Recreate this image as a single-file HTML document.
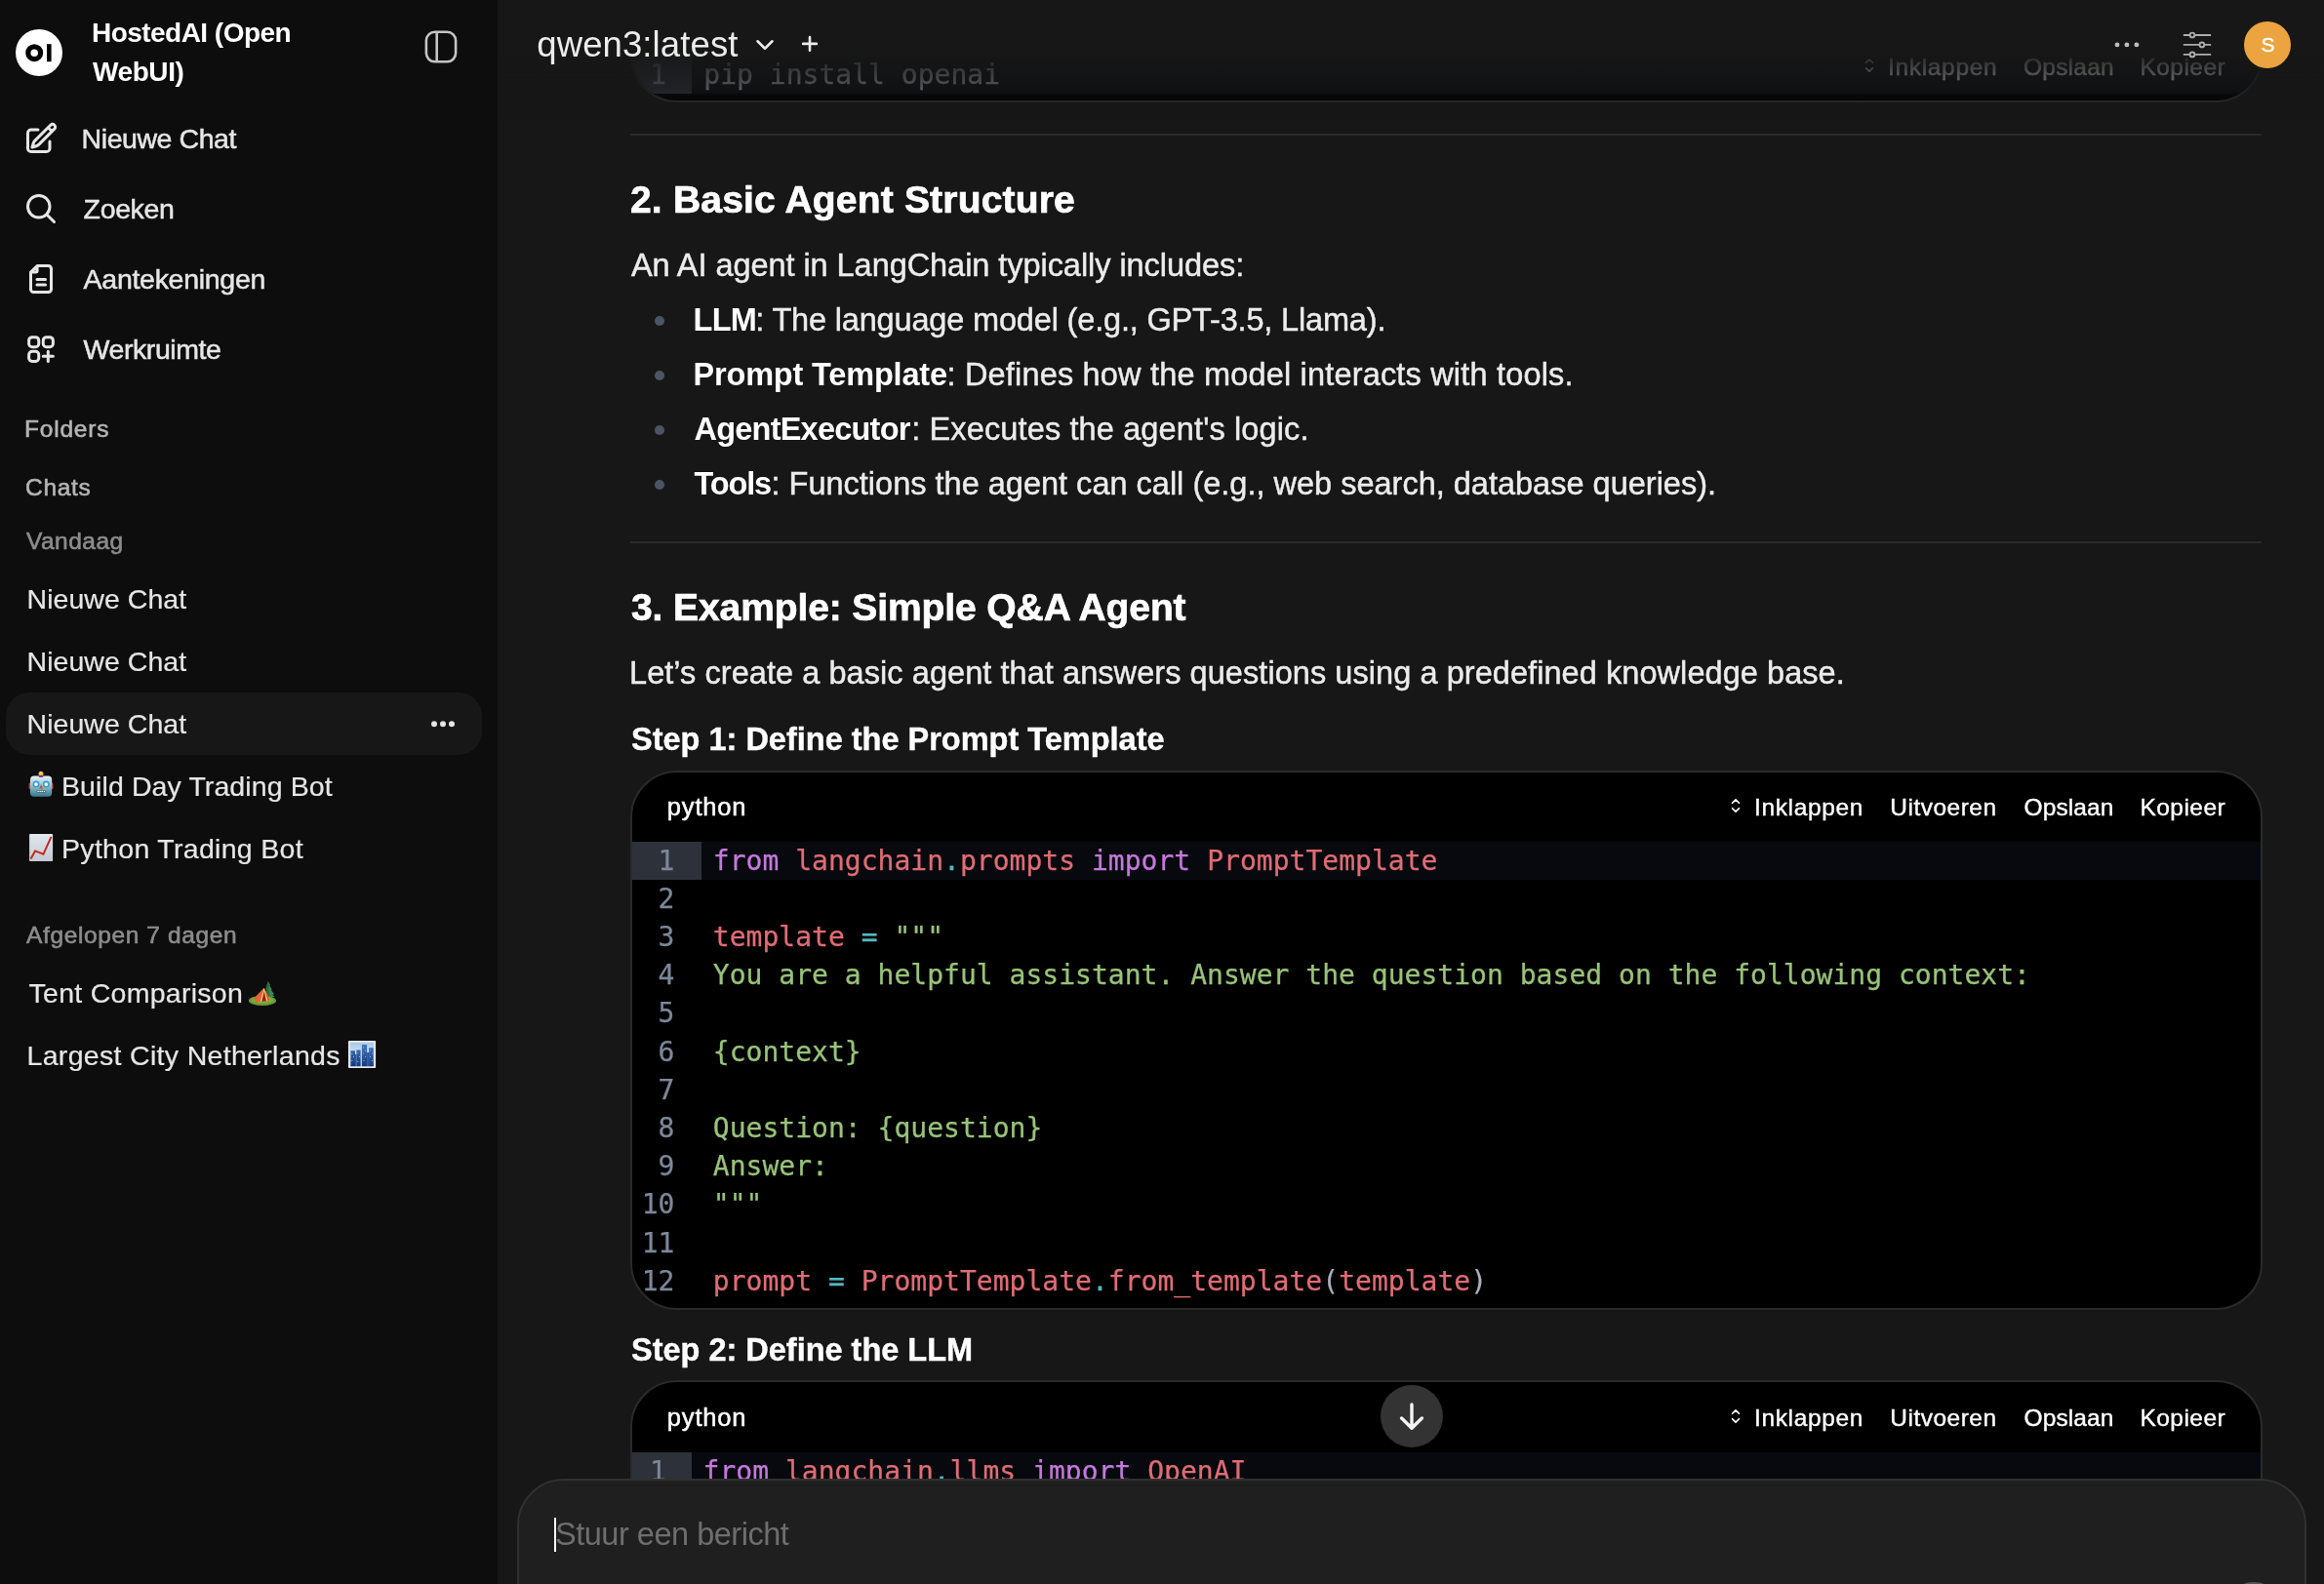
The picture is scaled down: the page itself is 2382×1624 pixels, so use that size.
<!DOCTYPE html>
<html lang="nl">
<head>
<meta charset="utf-8">
<title>Open WebUI</title>
<style>
html,body{margin:0;padding:0;}
body{width:2382px;height:1624px;overflow:hidden;position:relative;background:#171717;font-family:"Liberation Sans",sans-serif;color:#ececec;}
h2,h3,p,ul,li{margin:0;padding:0;font-weight:400;list-style:none;}
.t{position:absolute;white-space:nowrap;margin:0;padding:0;display:block;}
strong.t,h2.t,h3.t{font-weight:700;}
#side{position:absolute;left:0;top:0;width:510px;height:1624px;background:#0d0d0d;will-change:transform;}
#main{position:absolute;left:0;top:0;width:2382px;height:1624px;will-change:transform;}
.abs{position:absolute;}
.hr{position:absolute;left:646px;width:1672px;height:2px;background:#2a2a2a;}
.bul{position:absolute;left:670.5px;width:10.5px;height:10.5px;border-radius:50%;background:#4b5563;}
.cb{position:absolute;left:646px;width:1669px;border:2px solid #2a2a2a;border-radius:48px;background:#000;overflow:hidden;}
.cl{position:absolute;left:0;height:39.2px;line-height:39.2px;font-family:"DejaVu Sans Mono","Liberation Mono",monospace;font-size:28px;letter-spacing:0.02px;white-space:pre;-webkit-text-stroke-width:0.25px;}
.ln{position:absolute;left:0;top:0;text-align:right;color:#7d8799;}
.ct{position:absolute;top:0;}
.al{position:absolute;left:0;width:1669px;background:#07090e;}
.ag{position:absolute;left:0;background:#2c313a;}
#fade{position:absolute;left:510px;top:0;width:1872px;height:124px;background:linear-gradient(to bottom,#171717 0,#171717 44%,rgba(23,23,23,.88) 50%,rgba(23,23,23,.62) 72%,rgba(23,23,23,.2) 84%,rgba(23,23,23,0) 100%);}
#inp{position:absolute;left:530px;top:1516px;width:1830px;height:160px;border:2px solid #303030;border-radius:48px;background:#1f1f1f;}
</style>
</head>
<body>
<main id="main">
  <!-- previous code block (scrolled under header) -->
  <div class="cb" style="top:-60px;height:160.5px;">
<div class="al" style="top:114.70px;height:39.2px"></div>
<div class="ag" style="top:114.70px;width:61px;height:39.2px"></div>
<div class="cl" style="top:114.70px"><span class="ln" style="width:35.0px">1</span><code class="ct" style="left:73.30px"><span style="color:#abb2bf">pip install openai</span></code></div>
  </div>
<svg class="abs" style="left:1905px;top:56px" width="22" height="22" viewBox="0 0 24 24" fill="none" stroke="#fff" stroke-width="1.9" stroke-linecap="round" stroke-linejoin="round"><path d="M8.25 15 12 18.75 15.75 15m-7.5-6L12 5.25 15.75 9"/></svg>
<span class="t c0btn" style="left:1935.00px;top:54.50px;font-size:24.5px;line-height:27px;letter-spacing:0.671px;color:#ffffff;-webkit-text-stroke:0.4px currentColor;">Inklappen</span>
<span class="t c0btn" style="left:2074.00px;top:54.50px;font-size:24.5px;line-height:27px;letter-spacing:0.229px;color:#ffffff;-webkit-text-stroke:0.4px currentColor;">Opslaan</span>
<span class="t c0btn" style="left:2193.50px;top:54.50px;font-size:24.5px;line-height:27px;letter-spacing:0.452px;color:#ffffff;-webkit-text-stroke:0.4px currentColor;">Kopieer</span>
  <div class="hr" style="top:137px"></div>
<h2 class="t h2a" style="left:646.00px;top:183.00px;font-size:39px;line-height:43px;letter-spacing:0.184px;color:#ffffff;font-weight:700;-webkit-text-stroke:0.7px currentColor;">2. Basic Agent Structure</h2>
<p class="t p1" style="left:647.00px;top:254.00px;font-size:32.5px;line-height:36px;letter-spacing:-0.054px;color:#ececec;-webkit-text-stroke:0.45px currentColor;">An AI agent in LangChain typically includes:</p>
  <ul>
    <li><i class="bul" style="top:323.75px"></i>
<strong class="t li1" style="left:710.50px;top:310.00px;font-size:32.5px;line-height:36px;letter-spacing:-0.727px;color:#ffffff;font-weight:700;">LLM</strong>
<span class="t li1" style="left:774.25px;top:310.00px;font-size:32.5px;line-height:36px;letter-spacing:-0.167px;color:#ececec;-webkit-text-stroke:0.45px currentColor;">: The language model (e.g., GPT-3.5, Llama).</span>
    </li>
    <li><i class="bul" style="top:379.75px"></i>
<strong class="t li2" style="left:710.50px;top:366.00px;font-size:32.5px;line-height:36px;letter-spacing:-0.177px;color:#ffffff;font-weight:700;">Prompt Template</strong>
<span class="t li2" style="left:970.50px;top:366.00px;font-size:32.5px;line-height:36px;letter-spacing:0.181px;color:#ececec;-webkit-text-stroke:0.45px currentColor;">: Defines how the model interacts with tools.</span>
    </li>
    <li><i class="bul" style="top:435.75px"></i>
<strong class="t li3" style="left:711.50px;top:422.00px;font-size:32.5px;line-height:36px;letter-spacing:-0.771px;color:#ffffff;font-weight:700;">AgentExecutor</strong>
<span class="t li3" style="left:934.25px;top:422.00px;font-size:32.5px;line-height:36px;letter-spacing:0.129px;color:#ececec;-webkit-text-stroke:0.45px currentColor;">: Executes the agent's logic.</span>
    </li>
    <li><i class="bul" style="top:491.75px"></i>
<strong class="t li4" style="left:711.50px;top:478.00px;font-size:32.5px;line-height:36px;letter-spacing:-1.169px;color:#ffffff;font-weight:700;">Tools</strong>
<span class="t li4" style="left:790.50px;top:478.00px;font-size:32.5px;line-height:36px;letter-spacing:0.003px;color:#ececec;-webkit-text-stroke:0.45px currentColor;">: Functions the agent can call (e.g., web search, database queries).</span>
    </li>
  </ul>
  <div class="hr" style="top:555px"></div>
<h2 class="t h2b" style="left:647.00px;top:601.25px;font-size:39px;line-height:43px;letter-spacing:-0.104px;color:#ffffff;font-weight:700;-webkit-text-stroke:0.7px currentColor;">3. Example: Simple Q&amp;A Agent</h2>
<p class="t p2" style="left:645.00px;top:671.50px;font-size:32.5px;line-height:36px;letter-spacing:0.062px;color:#ececec;-webkit-text-stroke:0.45px currentColor;">Let’s create a basic agent that answers questions using a predefined knowledge base.</p>
<h3 class="t h3a" style="left:647.00px;top:740.00px;font-size:32.5px;line-height:36px;letter-spacing:0.000px;color:#ffffff;font-weight:700;-webkit-text-stroke:0.4px currentColor;">Step 1: Define the Prompt Template</h3>
  <div class="cb" style="top:790px;height:549px;">
<div class="al" style="top:70.50px;height:39.2px"></div>
<div class="ag" style="top:70.50px;width:71px;height:39.2px"></div>
<div class="cl" style="top:70.50px"><span class="ln" style="width:43.5px">1</span><code class="ct" style="left:82.75px"><span style="color:#c678dd">from</span><span style="color:#e06c75"> langchain</span><span style="color:#56b6c2">.</span><span style="color:#e06c75">prompts</span><span style="color:#c678dd"> import</span><span style="color:#e06c75"> PromptTemplate</span></code></div>
<div class="cl" style="top:109.70px"><span class="ln" style="width:43.5px">2</span><code class="ct" style="left:82.75px"></code></div>
<div class="cl" style="top:148.90px"><span class="ln" style="width:43.5px">3</span><code class="ct" style="left:82.75px"><span style="color:#e06c75">template</span><span style="color:#56b6c2"> = </span><span style="color:#98c379">"""</span></code></div>
<div class="cl" style="top:188.10px"><span class="ln" style="width:43.5px">4</span><code class="ct" style="left:82.75px"><span style="color:#98c379">You are a helpful assistant. Answer the question based on the following context:</span></code></div>
<div class="cl" style="top:227.30px"><span class="ln" style="width:43.5px">5</span><code class="ct" style="left:82.75px"></code></div>
<div class="cl" style="top:266.50px"><span class="ln" style="width:43.5px">6</span><code class="ct" style="left:82.75px"><span style="color:#98c379">{context}</span></code></div>
<div class="cl" style="top:305.70px"><span class="ln" style="width:43.5px">7</span><code class="ct" style="left:82.75px"></code></div>
<div class="cl" style="top:344.90px"><span class="ln" style="width:43.5px">8</span><code class="ct" style="left:82.75px"><span style="color:#98c379">Question: {question}</span></code></div>
<div class="cl" style="top:384.10px"><span class="ln" style="width:43.5px">9</span><code class="ct" style="left:82.75px"><span style="color:#98c379">Answer:</span></code></div>
<div class="cl" style="top:423.30px"><span class="ln" style="width:43.5px">10</span><code class="ct" style="left:82.75px"><span style="color:#98c379">"""</span></code></div>
<div class="cl" style="top:462.50px"><span class="ln" style="width:43.5px">11</span><code class="ct" style="left:82.75px"></code></div>
<div class="cl" style="top:501.70px"><span class="ln" style="width:43.5px">12</span><code class="ct" style="left:82.75px"><span style="color:#e06c75">prompt</span><span style="color:#56b6c2"> = </span><span style="color:#e06c75">PromptTemplate</span><span style="color:#56b6c2">.</span><span style="color:#e06c75">from_template</span><span style="color:#abb2bf">(</span><span style="color:#e06c75">template</span><span style="color:#abb2bf">)</span></code></div>
  </div>
<span class="t c1lang" style="left:683.80px;top:812.50px;font-size:25.5px;line-height:28px;letter-spacing:0.824px;color:#ffffff;-webkit-text-stroke:0.5px currentColor;">python</span>
  <svg class="abs" style="left:1768px;top:815px" width="22" height="22" viewBox="0 0 24 24" fill="none" stroke="#fff" stroke-width="1.9" stroke-linecap="round" stroke-linejoin="round"><path d="M8.25 15 12 18.75 15.75 15m-7.5-6L12 5.25 15.75 9"/></svg>
<span class="t c1btn" style="left:1798.00px;top:813.50px;font-size:24.5px;line-height:27px;letter-spacing:0.640px;color:#ffffff;-webkit-text-stroke:0.4px currentColor;">Inklappen</span>
<span class="t c1btn" style="left:1937.25px;top:813.50px;font-size:24.5px;line-height:27px;letter-spacing:0.503px;color:#ffffff;-webkit-text-stroke:0.4px currentColor;">Uitvoeren</span>
<span class="t c1btn" style="left:2074.50px;top:813.50px;font-size:24.5px;line-height:27px;letter-spacing:0.104px;color:#ffffff;-webkit-text-stroke:0.4px currentColor;">Opslaan</span>
<span class="t c1btn" style="left:2193.50px;top:813.50px;font-size:24.5px;line-height:27px;letter-spacing:0.452px;color:#ffffff;-webkit-text-stroke:0.4px currentColor;">Kopieer</span>
<h3 class="t h3b" style="left:647.00px;top:1366.00px;font-size:32.5px;line-height:36px;letter-spacing:-0.011px;color:#ffffff;font-weight:700;-webkit-text-stroke:0.4px currentColor;">Step 2: Define the LLM</h3>
  <div class="cb" style="top:1415px;height:300px;">
<div class="al" style="top:71.90px;height:39.2px"></div>
<div class="ag" style="top:71.90px;width:61px;height:39.2px"></div>
<div class="cl" style="top:71.90px"><span class="ln" style="width:35.0px">1</span><code class="ct" style="left:72.50px"><span style="color:#c678dd">from</span><span style="color:#e06c75"> langchain</span><span style="color:#56b6c2">.</span><span style="color:#e06c75">llms</span><span style="color:#c678dd"> import</span><span style="color:#e06c75"> OpenAI</span></code></div>
  </div>
<span class="t c2lang" style="left:683.80px;top:1438.50px;font-size:25.5px;line-height:28px;letter-spacing:0.824px;color:#ffffff;-webkit-text-stroke:0.5px currentColor;">python</span>
  <svg class="abs" style="left:1768px;top:1441px" width="22" height="22" viewBox="0 0 24 24" fill="none" stroke="#fff" stroke-width="1.9" stroke-linecap="round" stroke-linejoin="round"><path d="M8.25 15 12 18.75 15.75 15m-7.5-6L12 5.25 15.75 9"/></svg>
<span class="t c2btn" style="left:1798.00px;top:1439.50px;font-size:24.5px;line-height:27px;letter-spacing:0.640px;color:#ffffff;-webkit-text-stroke:0.4px currentColor;">Inklappen</span>
<span class="t c2btn" style="left:1937.25px;top:1439.50px;font-size:24.5px;line-height:27px;letter-spacing:0.503px;color:#ffffff;-webkit-text-stroke:0.4px currentColor;">Uitvoeren</span>
<span class="t c2btn" style="left:2074.50px;top:1439.50px;font-size:24.5px;line-height:27px;letter-spacing:0.104px;color:#ffffff;-webkit-text-stroke:0.4px currentColor;">Opslaan</span>
<span class="t c2btn" style="left:2193.50px;top:1439.50px;font-size:24.5px;line-height:27px;letter-spacing:0.452px;color:#ffffff;-webkit-text-stroke:0.4px currentColor;">Kopieer</span>
  <!-- header fade + top bar -->
  <div id="fade"></div>
<span class="t model" style="left:550.25px;top:25.00px;font-size:36.5px;line-height:41px;letter-spacing:0.109px;color:#ececec;">qwen3:latest</span>
  <svg class="abs" style="left:772px;top:34px" width="24" height="24" viewBox="0 0 24 24" fill="none" stroke="#ececec" stroke-width="2.5" stroke-linecap="round" stroke-linejoin="round"><path d="m19.5 8.25-7.5 7.5-7.5-7.5"/></svg>
  <svg class="abs" style="left:818px;top:33px" width="24" height="24" viewBox="0 0 24 24" fill="none" stroke="#ececec" stroke-width="2.6" stroke-linecap="round"><path d="M12 5.05v13.7M5.15 11.9h13.7"/></svg>
  <svg class="abs" style="left:2160px;top:36px" width="40" height="20" viewBox="0 0 40 20" fill="#bdbdbd"><circle cx="10" cy="9.9" r="2.45"/><circle cx="19.9" cy="9.9" r="2.45"/><circle cx="29.9" cy="9.9" r="2.45"/></svg>
  <svg class="abs" style="left:2234px;top:28px" width="36" height="36" viewBox="0 0 36 36" fill="none" stroke="#adadad" stroke-width="1.9" stroke-linecap="round"><path d="M4.6 8H9.6M16.4 8H31.4M4.6 17.9H19.5M26.3 17.9H31.4M4.6 27.9H9.6M16.4 27.9H31.4"/><circle cx="13" cy="8" r="2.4"/><circle cx="22.9" cy="17.9" r="2.4"/><circle cx="13" cy="27.9" r="2.4"/></svg>
  <div class="abs" style="left:2300px;top:22px;width:48px;height:48px;border-radius:50%;background:#eba43f"></div>
<span class="t avatar" style="left:2317.50px;top:33.50px;font-size:21px;line-height:23px;letter-spacing:-1.000px;color:#ffffff;-webkit-text-stroke:0.4px currentColor;">S</span>
  <!-- message input -->
  <div id="inp"></div>
  <div class="abs" style="left:568px;top:1556px;width:2px;height:35px;background:#fff"></div>
<span class="t ph" style="left:569.00px;top:1554.75px;font-size:32.5px;line-height:36px;letter-spacing:-0.483px;color:#6e6e6e;">Stuur een bericht</span>
  <div class="abs" style="left:2278px;top:1622px;width:64px;height:64px;border-radius:50%;background:#555"></div>
  <!-- scroll to bottom -->
  <div class="abs" style="left:1415px;top:1420px;width:64px;height:64px;border-radius:50%;background:#333"></div>
  <svg class="abs" style="left:1427px;top:1432px" width="40" height="40" viewBox="0 0 40 40" fill="none" stroke="#f4f4f4" stroke-width="3.4" stroke-linecap="round" stroke-linejoin="round"><path d="M20 7.9V32.2M9.6 22 20 32.3 30.4 22"/></svg>
</main>
<aside id="side">
  <div class="abs" style="left:16px;top:30px;width:48px;height:48px;border-radius:50%;background:#fff"></div>
  <svg class="abs" style="left:16px;top:30px" width="48" height="48" viewBox="0 0 48 48"><circle cx="19.2" cy="24.2" r="6.4" fill="none" stroke="#000" stroke-width="5.2"/><rect x="32" y="15.2" width="4.6" height="18" fill="#000"/></svg>
<span class="t title" style="left:94.00px;top:17.90px;font-size:28px;line-height:31px;letter-spacing:-0.535px;color:#ffffff;font-weight:700;">HostedAI (Open</span>
<span class="t title" style="left:95.00px;top:57.90px;font-size:28px;line-height:31px;letter-spacing:-0.420px;color:#ffffff;font-weight:700;">WebUI)</span>
  <svg class="abs" style="left:434px;top:30px" width="36" height="36" viewBox="0 0 36 36" fill="none" stroke="#c4c4c4" stroke-width="2.6"><rect x="2.9" y="2.8" width="30.2" height="30.5" rx="8.8"/><path d="M13.7 2.8V33.3"/></svg>
  <nav>
  <svg class="abs" style="left:24px;top:124px" width="36" height="36" viewBox="0 0 24 24" fill="none" stroke="#e6e6e6" stroke-width="2" stroke-linecap="round" stroke-linejoin="round"><path d="m16.862 4.487 1.687-1.688a1.875 1.875 0 1 1 2.652 2.652L10.582 16.07a4.5 4.5 0 0 1-1.897 1.13L6 18l.8-2.685a4.5 4.5 0 0 1 1.13-1.897l8.932-8.931Zm0 0L19.5 7.125M18 14v4.75A2.25 2.25 0 0 1 15.75 21H5.25A2.25 2.25 0 0 1 3 18.75V8.25A2.25 2.25 0 0 1 5.25 6H10"/></svg>
  <svg class="abs" style="left:24px;top:196px" width="36" height="36" viewBox="0 0 24 24" fill="none" stroke="#e6e6e6" stroke-width="2" stroke-linecap="round" stroke-linejoin="round"><path d="m21 21-5.197-5.197m0 0A7.5 7.5 0 1 0 5.196 5.196a7.5 7.5 0 0 0 10.607 10.607Z"/></svg>
  <svg class="abs" style="left:24px;top:268px" width="36" height="36" viewBox="0 0 24 24" fill="none" stroke="#e6e6e6" stroke-width="2" stroke-linecap="round" stroke-linejoin="round"><path d="M9.4 3H17a2 2 0 0 1 2 2V19a2 2 0 0 1-2 2H7a2 2 0 0 1-2-2V7.4L9.4 3V6.4a1 1 0 0 1-1 1H5M9.3 12.3H15M9.3 16H15"/></svg>
  <svg class="abs" style="left:24px;top:340px" width="36" height="36" viewBox="0 0 24 24" fill="none" stroke="#e6e6e6" stroke-width="2" stroke-linecap="round" stroke-linejoin="round"><path d="M13.5 16.875h3.375m0 0h3.375m-3.375 0V13.5m0 3.375v3.375M6 10.5h2.25a2.25 2.25 0 0 0 2.25-2.25V6a2.25 2.25 0 0 0-2.25-2.25H6A2.25 2.25 0 0 0 3.750 6v2.25A2.25 2.25 0 0 0 6 10.5Zm0 9.75h2.25A2.25 2.25 0 0 0 10.5 18v-2.25a2.25 2.25 0 0 0-2.250-2.250H6a2.25 2.25 0 0 0-2.25 2.25V18A2.25 2.25 0 0 0 6 20.250Zm9.750-9.750H18a2.25 2.25 0 0 0 2.25-2.25V6A2.25 2.25 0 0 0 18 3.750h-2.250A2.25 2.25 0 0 0 13.5 6v2.25a2.25 2.25 0 0 0 2.25 2.25Z"/></svg>
<span class="t nav" style="left:83.60px;top:126.00px;font-size:28.5px;line-height:32px;letter-spacing:-0.435px;color:#e6e6e6;-webkit-text-stroke:0.5px currentColor;">Nieuwe Chat</span>
<span class="t nav" style="left:85.60px;top:198.00px;font-size:28.5px;line-height:32px;letter-spacing:-0.362px;color:#e6e6e6;-webkit-text-stroke:0.5px currentColor;">Zoeken</span>
<span class="t nav" style="left:85.60px;top:270.00px;font-size:28.5px;line-height:32px;letter-spacing:-0.284px;color:#e6e6e6;-webkit-text-stroke:0.5px currentColor;">Aantekeningen</span>
<span class="t nav" style="left:85.60px;top:341.75px;font-size:28.5px;line-height:32px;letter-spacing:-0.434px;color:#e6e6e6;-webkit-text-stroke:0.5px currentColor;">Werkruimte</span>
  </nav>
<span class="t sec" style="left:25.00px;top:426.00px;font-size:24.5px;line-height:27px;letter-spacing:0.801px;color:#b4b4b4;-webkit-text-stroke:0.6px currentColor;">Folders</span>
<span class="t sec" style="left:26.00px;top:485.75px;font-size:24.5px;line-height:27px;letter-spacing:0.687px;color:#b4b4b4;-webkit-text-stroke:0.6px currentColor;">Chats</span>
<span class="t sec" style="left:27.00px;top:540.75px;font-size:24.5px;line-height:27px;letter-spacing:0.475px;color:#8c8c8c;-webkit-text-stroke:0.6px currentColor;">Vandaag</span>
<span class="t sec" style="left:27.00px;top:945.00px;font-size:24.5px;line-height:27px;letter-spacing:0.619px;color:#8c8c8c;-webkit-text-stroke:0.6px currentColor;">Afgelopen 7 dagen</span>
  <div class="abs" style="left:6px;top:710px;width:488px;height:64px;border-radius:24px;background:#171717"></div>
<span class="t chat" style="left:27.50px;top:598.00px;font-size:28.5px;line-height:32px;letter-spacing:0.050px;color:#e6e6e6;-webkit-text-stroke:0.2px currentColor;">Nieuwe Chat</span>
<span class="t chat" style="left:27.50px;top:662.00px;font-size:28.5px;line-height:32px;letter-spacing:0.050px;color:#e6e6e6;-webkit-text-stroke:0.2px currentColor;">Nieuwe Chat</span>
<span class="t chat" style="left:27.50px;top:726.00px;font-size:28.5px;line-height:32px;letter-spacing:0.050px;color:#e6e6e6;-webkit-text-stroke:0.2px currentColor;">Nieuwe Chat</span>
<span class="t chat" style="left:63.00px;top:790.00px;font-size:28.5px;line-height:32px;letter-spacing:0.100px;color:#e6e6e6;-webkit-text-stroke:0.2px currentColor;">Build Day Trading Bot</span>
<span class="t chat" style="left:63.00px;top:854.00px;font-size:28.5px;line-height:32px;letter-spacing:0.309px;color:#e6e6e6;-webkit-text-stroke:0.2px currentColor;">Python Trading Bot</span>
<span class="t chat" style="left:29.50px;top:1001.50px;font-size:28.5px;line-height:32px;letter-spacing:0.280px;color:#e6e6e6;-webkit-text-stroke:0.2px currentColor;">Tent Comparison</span>
<span class="t chat" style="left:27.50px;top:1065.60px;font-size:28.5px;line-height:32px;letter-spacing:0.319px;color:#e6e6e6;-webkit-text-stroke:0.2px currentColor;">Largest City Netherlands</span>
  <svg class="abs" style="left:438px;top:732px" width="32" height="20" viewBox="0 0 32 20" fill="#e6e6e6"><circle cx="7" cy="10.2" r="3"/><circle cx="16" cy="10.2" r="3"/><circle cx="25" cy="10.2" r="3"/></svg>
  <!-- robot -->
  <svg class="abs" role="img" aria-label="🤖" style="left:29px;top:790px" width="26" height="28" viewBox="0 0 26 28">
    <defs><linearGradient id="rb" x1="0" y1="0" x2="0" y2="1"><stop offset="0" stop-color="#e6f1f4"/><stop offset=".45" stop-color="#9cc3cf"/><stop offset="1" stop-color="#357a91"/></linearGradient></defs>
    <circle cx="13" cy="3.3" r="2.5" fill="#f3ae2c"/><circle cx="12.7" cy="2.6" r="1.2" fill="#fbd978"/>
    <rect x="0.6" y="12.6" width="2.6" height="6.6" rx="1.1" fill="#d8392d"/><rect x="22.9" y="12.6" width="2.6" height="6.6" rx="1.1" fill="#d8392d"/>
    <rect x="2" y="5.6" width="22.2" height="21.1" rx="4" fill="url(#rb)"/>
    <rect x="10.6" y="5" width="4.8" height="1.9" rx=".8" fill="#6a3fa3"/>
    <circle cx="8" cy="14.1" r="3.5" fill="#2b9fd8"/><circle cx="8" cy="14.1" r="1.9" fill="#ffffff"/>
    <circle cx="18.3" cy="14.1" r="3.5" fill="#2b9fd8"/><circle cx="18.3" cy="14.1" r="1.9" fill="#ffffff"/>
    <path d="M13.1 14 14.9 18.5H11.3Z" fill="#e0453d"/>
    <rect x="8.6" y="20.2" width="9.2" height="2.4" rx=".6" fill="#2f5f70"/>
    <path d="M9.3 20.7h1.5v1.4H9.3zM11.4 20.7h1.5v1.4h-1.5zM13.5 20.7H15v1.4h-1.5zM15.6 20.7h1.5v1.4h-1.5z" fill="#eef4f6"/>
  </svg>
  <!-- chart increasing -->
  <svg class="abs" role="img" aria-label="📈" style="left:29px;top:854px" width="26" height="30" viewBox="0 0 26 30">
    <defs><linearGradient id="ch" x1="0" y1="0" x2="0" y2="1"><stop offset="0" stop-color="#e3e8ef"/><stop offset="1" stop-color="#c3c9d3"/></linearGradient></defs>
    <rect x="1.1" y="1" width="24" height="28" rx=".8" fill="url(#ch)"/>
    <path d="M2.6 26.4 7 18.4 15.4 21.8 23.5 3.8" fill="none" stroke="#c7271d" stroke-width="2" stroke-linejoin="miter" stroke-linecap="butt"/>
  </svg>
  <!-- camping -->
  <svg class="abs" role="img" aria-label="🏕️" style="left:254px;top:1005px" width="30" height="28" viewBox="0 0 30 28">
    <ellipse cx="15" cy="20.9" rx="14.1" ry="5.2" fill="#6a9b36"/>
    <ellipse cx="15" cy="20.2" rx="11.5" ry="3.6" fill="#7cab3e"/>
    <path d="M20.6 1 23.2 5.2H22L25 9.4H23.6L27.2 14.6H25.4L27.4 17H17.2L18.6 14.6H17.6L19.4 9.4H18.4Z" fill="#3c8752"/>
    <path d="M20.6 1 22 5.2 21.2 9.4 22.4 14.6 21.6 17H17.2L18.6 14.6H17.6L19.4 9.4H18.4Z" fill="#2c6b43"/>
    <path d="M16.6 7.7 6.1 18.8 8.2 22.2 10.6 22.4Z" fill="#e85f3a"/>
    <path d="M16.6 7.7 10.6 22.4 22.6 20.6Z" fill="#f1d273"/>
    <path d="M16.6 7.7 22.6 20.6 20.4 20.9Z" fill="#e4532f"/>
    <path d="M16.6 7.7 12.6 22.1 10.6 22.4Z" fill="#e4532f"/>
    <path d="M16.7 11.2 14.2 21.9 19 21.2Z" fill="#9b2015"/>
  </svg>
  <!-- cityscape -->
  <svg class="abs" role="img" aria-label="🏙️" style="left:356px;top:1066px" width="30" height="30" viewBox="0 0 30 30">
    <defs>
      <linearGradient id="sky" x1="0" y1="0" x2="0" y2="1"><stop offset="0" stop-color="#a8c8ea"/><stop offset=".6" stop-color="#dce9f5"/><stop offset="1" stop-color="#9fc3ea"/></linearGradient>
      <linearGradient id="bld" x1="0" y1="0" x2="0" y2="1"><stop offset="0" stop-color="#4278c0"/><stop offset="1" stop-color="#173a7c"/></linearGradient>
    </defs>
    <rect x="1" y=".9" width="28.1" height="28.1" rx=".8" fill="#e6eaef"/>
    <rect x="2.8" y="2.7" width="24.5" height="24.5" fill="url(#sky)"/>
    <path d="M3.4 27.2V11.3H8V27.2zM9.4 27.2V10.6h4.2V27.2zM14.9 27.2V5h5.2V27.2zM22.1 27.2V8.2h4.7V27.2z" fill="url(#bld)"/>
    <path d="M8 27.2V15h1.4V27.2zM20.1 27.2V13h2V27.2z" fill="#2a569f"/>
    <rect x="14.1" y="16.5" width=".9" height="10.7" fill="#86dbf7"/>
    <path d="M4.4 14h.8v1h-.8zM6.2 17h.8v1h-.8zM4.4 21h.8v1h-.8zM10.4 13h.8v1h-.8zM12 17h.8v1H12zM10.4 22h.8v1h-.8zM16 7.4h.8v1H16zM18 10.4h.8v1H18zM16 13.4h.8v1H16zM18 17h.8v1H18zM16.6 21h.8v1h-.8zM23.2 10.6h.8v1h-.8zM25 13.6h.8v1H25zM23.2 17h.8v1h-.8zM25 21h.8v1H25z" fill="#9ccaf3"/>
  </svg>
</aside>
</body>
</html>
